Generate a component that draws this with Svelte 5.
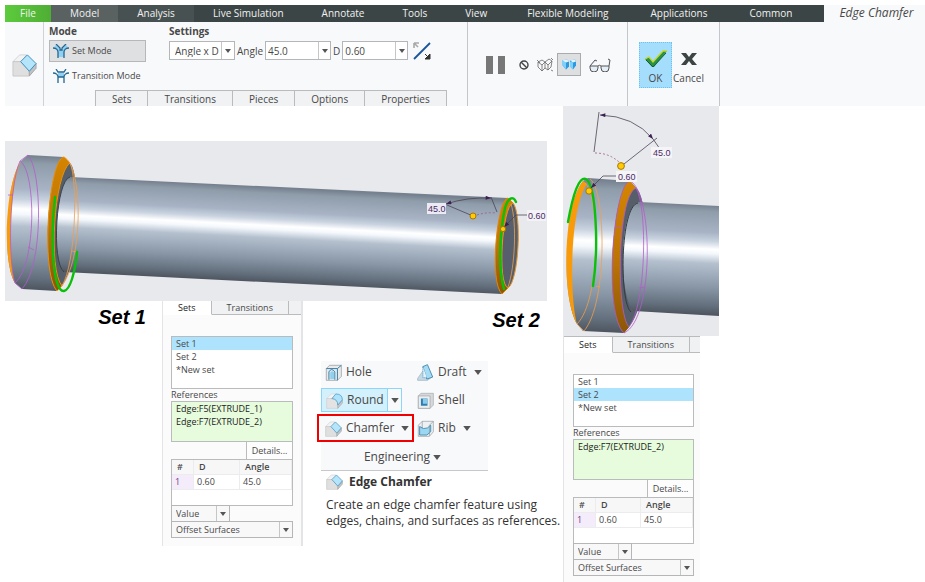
<script>
const tabs = ['Analysis', 'Live Simulation', 'Annotate', 'Tools', 'View', 'Flexible Modeling', 'Applications', 'Common'];
const slides = ['Sets', 'Transitions', 'Pieces', 'Options', 'Properties'];
const sets = ['Set 1', 'Set 2', '*New set'];

let angle = $state('45.0');
let distance = $state('0.60');
let mode = $state('set');
</script>

{#snippet chamferIcon()}
	<svg class="tool-icon" viewBox="0 0 26 26" aria-hidden="true">
		<path d="M1 10 8 3h7l-5 7z" fill="#f3f3f3" stroke="#d2d2d2" />
		<path d="M1 10h8l9 10v5H1z" fill="#dfdfdf" stroke="#c8c8c8" />
		<path d="m18 20 7-8v5l-7 8z" fill="#c0c3c6" stroke="#a4a4a4" />
		<path d="m9 10 7-7 9 9-7 8z" fill="#b4e5fb" stroke="#3b8fbd" />
	</svg>
{/snippet}

{#snippet modeIcon(joined)}
	<svg class="mode-icon" viewBox="0 0 16 14" aria-hidden="true">
		<path d={joined ? 'M5 4h6v4H5z' : 'M5 6h6v7H5z'} fill="#8fd0f3" />
		{#if !joined}
			<path d="m1 3 2-2 4 4-2 2zM15 3l-2-2-4 4 2 2z" fill="#8fd0f3" />
		{/if}
		<path d="M0 4c3 0 5 2 5 4v6M16 4c-3 0-5 2-5 4v6" fill="none" stroke="#24668f" stroke-width="1.3" />
		{#if joined}
			<path d="M3 0l2 3h6l2-3M5 8h6" fill="none" stroke="#24668f" stroke-width="1.3" />
		{:else}
			<path d="M3 0l4 4v2h2V4l4-4" fill="none" stroke="#24668f" stroke-width="1.3" />
		{/if}
	</svg>
{/snippet}

{#snippet arrow()}
	<svg class="arrow" viewBox="0 0 6 4" aria-hidden="true"><path d="M0 0h6L3 4z" /></svg>
{/snippet}

{#snippet drop(label, options, kind)}
	<span class="combo {kind}">
		<select aria-label={label}>
			{#each options as option}
				<option>{option}</option>
			{/each}
		</select>
		<span class="cap">{@render arrow()}</span>
	</span>
{/snippet}

{#snippet setPanel(selected, references, kind)}
	<section class="panel {kind}">
		<div class="panel-tabs">
			<button class="active">Sets</button>
			<button>Transitions</button>
			<span></span>
		</div>
		<div class="panel-body">
			<ul class="list">
				{#each sets as name}
					<li class:selected={name === selected}>{name}</li>
				{/each}
			</ul>
			<h3>References</h3>
			<ul class="list refs">
				{#each references as reference}
					<li>{reference}</li>
				{/each}
			</ul>
			<button class="details">Details...</button>
			<div class="values">
				<table>
					<thead>
						<tr><th>#</th><th>D</th><th>Angle</th></tr>
					</thead>
					<tbody>
						<tr><td>1</td><td>0.60</td><td>45.0</td></tr>
					</tbody>
				</table>
			</div>
			{@render drop('Value type', ['Value', 'Reference'], 'value')}
			{@render drop('Offset method', ['Offset Surfaces', 'Tangent To Surfaces'], 'offset')}
		</div>
	</section>
{/snippet}

<header>
	<div class="menu">
		<nav>
			<button class="file">File</button>
			<button class="model">Model</button>
			{#each tabs as tab}
				<button class:near={tab === 'Analysis'}>{tab}</button>
			{/each}
		</nav>
		<em>Edge Chamfer</em>
	</div>

	<div class="ribbon">
		<div class="feature">{@render chamferIcon()}</div>

		<div class="dashboard">
			<div class="groups">
				<div class="mode">
					<h2>Mode</h2>
					<button class:on={mode === 'set'} onclick={() => mode = 'set'}>{@render modeIcon(false)}Set Mode</button>
					<button class:on={mode === 'transition'} onclick={() => mode = 'transition'}>{@render modeIcon(true)}Transition Mode</button>
				</div>
				<div class="settings">
					<h2>Settings</h2>
					<div class="fields">
						{@render drop('Dimension scheme', ['Angle x D', 'D x D', '45 x D'], 'scheme')}
						<label for="angle">Angle</label>
						<span class="combo number">
							<input id="angle" bind:value={angle} />
							<button class="cap" aria-label="Recent angles">{@render arrow()}</button>
						</span>
						<label for="distance">D</label>
						<span class="combo number">
							<input id="distance" bind:value={distance} />
							<button class="cap" aria-label="Recent distances">{@render arrow()}</button>
						</span>
						<button class="flip" aria-label="Flip angle">
							<svg viewBox="0 0 18 18">
								<path d="M1 17 17 1" stroke="#17549a" stroke-width="1.8" />
								<path d="M1 1h5M1 1v5M1 1l4 4" fill="none" stroke="#a9a9a9" stroke-width="1.6" />
								<path d="M17 12v5h-5zM12 12l4 4" fill="#333" stroke="#333" />
							</svg>
						</button>
					</div>
				</div>
			</div>
			<div class="slides">
				{#each slides as slide}
					<button>{slide}</button>
				{/each}
			</div>
		</div>

		<div class="preview">
			<button class="pause" aria-label="Pause">
				<svg viewBox="0 0 19 18"><path d="M0 0h7v18H0zM12 0h7v18h-7z" fill="#777" /></svg>
			</button>
			<button aria-label="No preview">
				<svg class="none" viewBox="0 0 10 10"><circle cx="5" cy="5" r="4" /><path d="m2 2 6 6" /></svg>
			</button>
			<button aria-label="Unattached preview">
				<svg class="mesh" viewBox="0 0 16 14">
					<path d="m1 4 4-2 3 2v6l-3 3-4-4zM1 4l4 3 3-3M5 7v6M8 4l4-3 3 2-1 6-3 3-3-2M8 4l3 3 4-4M11 7v5M0 2l3 3M14 0l2 2M14 12l2 1" />
				</svg>
			</button>
			<button class="shaded" aria-label="Attached preview">
				<svg viewBox="0 0 16 12">
					<path d="m1 2 5-1 2 2v5l-3 3-4-5z" fill="#2b9ae0" />
					<path d="m1 2 4 2v7L1 6z" fill="#7dd0fa" />
					<path d="m9 2 5-1 1 2v4l-3 4-3-3z" fill="#2b9ae0" />
					<path d="m9 3 3 1v7L9 8z" fill="#7dd0fa" />
					<path d="m1 2 5-1 2 2-3 1zM9 2l5-1 1 2-3 1z" fill="#e0f6ff" />
				</svg>
			</button>
			<button aria-label="Verify">
				<svg class="glasses" viewBox="0 0 22 14">
					<path d="M1 8h8v2a3 3 0 0 1-8 0zM12 8h8v2a3 3 0 0 1-8 0zM9 8c1-1 2-1 3 0M1 8l5-6 2 1M20 8l1-6-2-1" />
				</svg>
			</button>
		</div>

		<div class="finish">
			<button class="ok">
				<svg viewBox="0 0 24 18">
					<path d="m1 9 4-2 4 5L19 1h4L10 17H8z" fill="#279348" />
					<path d="m1 9 4-2 4 5L19 1h4" fill="none" stroke="#c9d71e" stroke-width="1.3" />
					<path d="m2 10 7 7L22 3" fill="none" stroke="#1b5b34" />
				</svg>
				OK
			</button>
			<button>
				<svg viewBox="0 0 24 18"><path d="M4 3h5l3 4 3-4h5l-5 6 5 6h-5l-3-4-3 4H4l5-6z" fill="#3c4444" /></svg>
				Cancel
			</button>
		</div>
	</div>
</header>

<main>
	<div class="left">
		<svg class="scene" viewBox="5 141 542 160" role="img" aria-label="Pin with chamfered edges">
			<defs>
				<linearGradient id="shaft" gradientUnits="userSpaceOnUse" x1="70" y1="177" x2="65" y2="272">
					<stop offset="0" stop-color="#76818f" />
					<stop offset=".06" stop-color="#8f9caa" />
					<stop offset=".25" stop-color="#a8b4c5" />
					<stop offset=".33" stop-color="#c9d3e0" />
					<stop offset=".4" stop-color="#fff" />
					<stop offset=".44" stop-color="#f4f8fc" />
					<stop offset=".53" stop-color="#b4c0ce" />
					<stop offset=".75" stop-color="#8896a6" />
					<stop offset=".92" stop-color="#626e7b" />
					<stop offset="1" stop-color="#4d555f" />
				</linearGradient>
				<linearGradient id="head" href="#shaft" x1="42" y1="156" x2="37" y2="290" />
				<linearGradient id="ring" x1="0" y1="0" x2="0" y2="1">
					<stop offset="0" stop-color="#d48400" />
					<stop offset=".5" stop-color="#bd7505" />
					<stop offset="1" stop-color="#8c5606" />
				</linearGradient>
				<marker id="tip" viewBox="0 0 8 6" refX="8" refY="3" markerWidth="6" markerHeight="4" markerUnits="userSpaceOnUse" orient="auto-start-reverse">
					<path d="M0 0l8 3-8 3z" fill="#3a2152" />
				</marker>
			</defs>
			<path d="M5 141h542v160H5z" fill="#e8e9ed" />

			<path d="M28 155 64 157C51 170 42 262 57 291L22 289 15 283C2 262 5 184 21 161z" fill="url(#head)" />
			<path d="M21 161C5 184 2 262 15 283 8 262 9 186 21 161z" fill="#f99b09" />
			<path class="violet" d="M28 155C42 170 44 265 22 289M20 161C36 170 37 264 15 283C8 262 9 186 20 161M20 161l8-6M15 283l7 6M28 247l6 3M8 195h5" />

			<path d="M64 157 70 163C80 172 82 258 62 286L57 291C40 272 49 158 64 157z" fill="#555e69" />
			<path d="M64 157C49 158 40 272 57 291L62 286C48 270 54 174 70 163z" fill="url(#ring)" stroke="#e8920c" />
			<path d="M70 177C56 180 51 262 64 272L502 294 508 198z" fill="url(#shaft)" />
			<path d="M70 177C56 180 51 262 64 272" fill="none" stroke="#39424c" />
			<path class="amber" d="M70 163C78 180 76 262 62 286M64 157C83 165 85 268 57 291M72 251l5 1" />
			<path class="green" d="M55 197C50 240 53 293 64 291C70 290 75 273 77 252" />

			<path d="M508 198C497 199 489 283 502 294L508 288 518 240 513 203z" fill="url(#ring)" stroke="#dc860b" />
			<path d="M513 203C502 206 497 284 508 288C519 281 522 213 513 203z" fill="#565f6b" stroke="#e8972a" />
			<path class="amber" d="M511 204C517 222 515 268 508 287" />
			<path class="green" d="M516 202C513 195 508 198 505 208C500 230 498 269 504 289" />

			<path class="dim" d="M447 205l26 11M491 197l6 15M516 215h12" />
			<path class="dim" d="M446 204Q467 197 491 198" marker-start="url(#tip)" marker-end="url(#tip)" />
			<path class="dim" d="M516 215 504 227" marker-end="url(#tip)" />
			<path class="dash" d="M477 215q9-3 19-2" />
			<circle class="handle" cx="473" cy="216" r="3" />
			<circle class="handle" cx="503" cy="229" r="2.6" />
			<rect x="427" y="203" width="19" height="11" fill="#eceaf2" />
			<text x="428" y="212">45.0</text>
			<rect x="527" y="210" width="19" height="11" fill="#f3f2f6" />
			<text x="528" y="219">0.60</text>
		</svg>

		<div class="below">
			<strong class="first">Set 1</strong>
			{@render setPanel('Set 1', ['Edge:F5(EXTRUDE_1)', 'Edge:F7(EXTRUDE_2)'], 'tucked')}
			<div class="side">
				<strong>Set 2</strong>
				<div class="engineering">
					<button>
						<svg class="tool-icon" viewBox="0 0 26 26" aria-hidden="true">
							<path d="m2 7 5-5h18v17l-6 6H2z" fill="#e9eaeb" stroke="#8b8f94" />
							<path d="M6 24V12q4-7 9 0v12M2 7h17v18M19 7l6-5" fill="none" stroke="#357ea8" stroke-width="1.5" />
							<path d="M8 23V13q3-4 6 0v10z" fill="#8ed1ef" />
						</svg>
						Hole
					</button>
					<button>
						<svg class="tool-icon" viewBox="0 0 26 26" aria-hidden="true">
							<path d="M1 22 11 8l13 11-8 6H1z" fill="#c3d9e6" stroke="#9ab" />
							<path d="m9 4 7-3 8 19-9 3z" fill="#a4dcf5" stroke="#3d83a9" stroke-width="1.3" />
							<path d="M9 4v17h6" fill="#e2f3fb" stroke="#3d83a9" stroke-dasharray="2 1" />
						</svg>
						Draft {@render arrow()}
					</button>
					<div class="split">
						<button>
							<svg class="tool-icon" viewBox="0 0 26 26" aria-hidden="true">
								<path d="M1 10 8 3h8l-7 7z" fill="#f3f3f3" stroke="#d5d5d5" />
								<path d="M1 10h8q9 1 9 10v5H1z" fill="#e3e3e3" stroke="#d0d0d0" />
								<path d="m18 20 7-8v5l-7 8z" fill="#c7c9cc" stroke="#aaa" />
								<path d="M9 10 15 3q10 0 10 9l-7 8q0-9-9-10z" fill="#aee3fb" stroke="#3b8fbd" />
							</svg>
							Round
						</button>
						<button class="more" aria-label="More rounds">{@render arrow()}</button>
					</div>
					<button>
						<svg class="tool-icon" viewBox="0 0 26 26" aria-hidden="true">
							<path d="m2 6 4-4h19v18l-5 5H2z" fill="#d6d8da" stroke="#a3a7ab" />
							<path d="M2 6h18v19H2z" fill="#eceded" stroke="#9b9fa3" />
							<path d="M6 10h10v11H6z" fill="#2f7fae" />
							<path d="M9 10h7v8H9z" fill="#8ccbed" />
						</svg>
						Shell
					</button>
					<button class="framed">{@render chamferIcon()}Chamfer {@render arrow()}</button>
					<button>
						<svg class="tool-icon" viewBox="0 0 26 26" aria-hidden="true">
							<path d="m2 8 6-6h17v16l-6 7H2z" fill="#eef0f1" stroke="#8e969c" />
							<path d="M4 23V10l6 3q6 1 11-5v10l-6 5z" fill="#9ad7f3" stroke="#3d83a9" stroke-width="1.3" />
							<path d="M8 2v12M25 2l-6 6v16" fill="none" stroke="#7d94a2" />
						</svg>
						Rib {@render arrow()}
					</button>
					<button class="group">Engineering {@render arrow()}</button>
				</div>
				<div class="tip">
					<h4>{@render chamferIcon()}Edge Chamfer</h4>
					<p>Create an edge chamfer feature using<br>edges, chains, and surfaces as references.</p>
				</div>
			</div>
		</div>
	</div>

	<div class="right">
		<svg class="scene" viewBox="563 106 156 230" role="img" aria-label="Pin head with both chamfer sets">
			<defs>
				<linearGradient id="neck" href="#shaft" x1="665" y1="203" x2="660" y2="313" />
				<linearGradient id="cap" href="#shaft" x1="605" y1="180" x2="599" y2="332" />
			</defs>
			<path d="M563 106h156v230H563z" fill="#e8e9ed" />
			<path d="M588 178 630 181C614 200 605 308 624 333L583 331 577 324C561 296 563 206 583 181z" fill="url(#cap)" />
			<path d="M583 181C563 206 561 296 577 324C569 296 570 207 587 184z" fill="#f99b09" />
			<path class="amber" d="M590 179C606 190 608 303 584 331M585 183C600 196 601 300 577 324L584 331M596 286l4 1" />
			<path d="M630 181 636 188C650 198 652 300 629 327L624 333C603 315 613 184 630 181z" fill="#555e69" />
			<path d="M630 181C613 184 603 315 624 333L629 327C616 314 617 196 636 188z" fill="url(#ring)" />
			<path d="M639 202C618 206 619 302 634 311L719 316V206z" fill="url(#neck)" />
			<path d="M638 203C620 206 619 302 631 312" fill="none" stroke="#333b44" />
			<path class="violet" d="M630 181C613 184 603 315 624 333C655 319 653 191 630 181M636 188C617 196 616 314 629 327C646 305 648 209 636 188M615 226l7 2M639 288l6-1" />
			<path class="green" d="M568 222C573 194 579 176 586 179C596 185 599 246 593 286" />

			<path class="dim" d="M599 112l-5 40M657 138l-33 26M653 139l7 10M616 176h-13" />
			<path class="dim" d="M600 115Q634 116 653 139" marker-start="url(#tip)" marker-end="url(#tip)" />
			<path class="dim" d="m603 176-12 12" marker-end="url(#tip)" />
			<path class="dash" d="M595 153q14 0 24 9" />
			<circle class="handle" cx="621" cy="166" r="3.4" />
			<circle class="handle" cx="589" cy="191" r="3.2" />
			<rect x="651" y="147" width="21" height="11" fill="#f5f4f7" />
			<text x="653" y="156">45.0</text>
			<rect x="616" y="171" width="21" height="11" fill="#f5f4f7" />
			<text x="618" y="180">0.60</text>
		</svg>
		{@render setPanel('Set 2', ['Edge:F7(EXTRUDE_2)'], 'open')}
	</div>
</main>

<style>
:global(body) {
	margin: 0;
	background: #fff;
	color: #484848;
	font: 10px/12px 'Open Sans', 'Noto Sans', sans-serif;
}

button, input, select {
	box-sizing: border-box;
	margin: 0;
	padding: 0;
	border: 0;
	border-radius: 0;
	background: none;
	color: inherit;
	font: inherit;
	appearance: none;
}

h2, h3, h4, p, ul {
	margin: 0;
	padding: 0;
	font: inherit;
	list-style: none;
}

svg {
	display: block;
	flex: none;
}

header {
	padding: 5px 0 0 5px;
}

/* menu */

.menu {
	display: flex;
	height: 17px;
	background: #f8f9fb;

	em {
		width: 101px;
		padding-left: 4px;
		box-sizing: border-box;
		font-size: 12px;
		line-height: 15px;
		text-align: center;
		white-space: nowrap;
	}
}

nav {
	flex: 1;
	display: flex;
	background: #3c4545;
	color: #f2f2f2;

	button {
		padding: 0 19px 2px;
		white-space: nowrap;
	}

	button:nth-child(n + 8) {
		padding: 0 21px 2px;
	}

	.file {
		width: 46px;
		padding: 0 0 2px;
		background: linear-gradient(90deg, #5ccb3c, #4fae35);
	}

	.model {
		background: #596161;
	}

	.near {
		background: #485151;
	}
}

/* ribbon */

.ribbon {
	display: flex;
	height: 84px;
	background: #f8f9fb;
}

.feature {
	display: flex;
	align-items: center;
	justify-content: center;
	width: 38px;
	border-right: 1px solid #d0d2d5;

	.tool-icon {
		width: 25px;
		height: 25px;
	}
}

.dashboard {
	display: flex;
	flex-direction: column;
	justify-content: space-between;
	width: 423px;
	border-right: 1px solid #c4c6c9;

	h2 {
		padding: 3px 0;
		font-weight: 700;
	}
}

.groups {
	display: flex;
	gap: 23px;
	padding-left: 5px;
}

.mode {
	width: 97px;

	button {
		display: flex;
		align-items: center;
		gap: 3px;
		width: 100%;
		height: 22px;
		padding-left: 3px;
		border: 1px solid transparent;
		font-size: 9px;
		white-space: nowrap;
	}

	button + button {
		margin-top: 3px;
	}

	.on {
		border-color: #b5b7b9;
		background: #dfe0e2;
	}
}

.mode-icon {
	width: 16px;
	height: 14px;
}

.fields {
	display: flex;
	align-items: center;
	gap: 2px;
	padding-top: 1px;
}

.combo {
	position: relative;
	display: flex;
	box-sizing: border-box;
	height: 19px;
	border: 1px solid #b4b6b8;
	background: #fff;

	select, input {
		flex: 1;
		width: 100%;
		min-width: 0;
		padding: 0 2px;
	}
}

.cap {
	display: flex;
	align-items: center;
	justify-content: center;
	width: 12px;
	border-left: 1px solid #c4c6c8;
}

select + .cap {
	position: absolute;
	top: 0;
	right: 0;
	bottom: 0;
	pointer-events: none;
}

.arrow {
	width: 6px;
	height: 4px;
	fill: #555;
}

.scheme {
	width: 66px;

	select {
		padding-left: 5px;
	}
}

.number {
	width: 66px;
}

.flip {
	margin-left: 3px;

	svg {
		width: 18px;
		height: 18px;
	}
}

.slides {
	display: flex;
	padding-left: 51px;

	button {
		height: 16px;
		padding: 0 16px;
		border: 1px solid #b9bbbd;
		border-bottom: 0;
		background: #f1f2f3;
	}

	button + button {
		border-left: 0;
	}
}

.preview {
	display: flex;
	align-items: center;
	gap: 8px;
	width: 141px;
	padding: 1px 0 0 18px;
	border-right: 1px solid #c4c6c9;

	.pause {
		margin-right: 6px;
	}

	.pause svg {
		width: 19px;
		height: 18px;
	}

	.none {
		width: 10px;
		height: 10px;
		fill: none;
		stroke: #444;
		stroke-width: 1.4;
	}

	.mesh {
		width: 16px;
		height: 14px;
		fill: none;
		stroke: #666;
		stroke-width: 0.8;
	}

	.shaded {
		margin-left: -4px;
		padding: 4px 3px;
		border: 1px solid #a9abad;
		background: #dddfe1;
	}

	.shaded svg {
		width: 16px;
		height: 13px;
	}

	.glasses {
		width: 22px;
		height: 14px;
		fill: #e3eef7;
		stroke: #555;
	}
}

.finish {
	display: flex;
	align-items: center;
	width: 80px;
	padding: 2px 0 0 11px;
	border-right: 1px solid #c4c6c9;

	button {
		display: flex;
		flex-direction: column;
		align-items: center;
		gap: 4px;
		min-width: 33px;
		height: 46px;
		padding-top: 8px;
	}

	svg {
		width: 24px;
		height: 18px;
	}

	.ok {
		border: 1px dotted #6cc3f0;
		padding-top: 7px;
		background: #a5ddfd;
	}
}

/* content */

main {
	display: grid;
	grid-template-columns: minmax(0, 542fr) minmax(0, 156fr) minmax(0, 190fr);
	gap: 16px;
	align-items: start;
	padding-left: 5px;
}

.left {
	padding-top: 35px;
}

.scene {
	width: 100%;
	height: auto;
	font-family: 'Liberation Sans', Arial, sans-serif;
	font-size: 9px;

	text {
		fill: #4b2a68;
	}
}

.violet, .amber, .green, .dim, .dash {
	fill: none;
	stroke-width: 0.8;
}

.violet { stroke: #b45ccc; }
.amber { stroke: #f0a04a; }
.dim { stroke: #4b4456; }

.green {
	stroke: #0ac00a;
	stroke-width: 2.4;
	stroke-linecap: round;
}

.dash {
	stroke: #a05888;
	stroke-dasharray: 2 2;
}

.handle {
	fill: #ffcb05;
	stroke: #a87700;
}

.below {
	display: flex;
	align-items: flex-start;

	strong {
		color: #000;
		font: italic 700 20px/24px 'Liberation Sans', Arial, sans-serif;
	}
}

.first {
	flex: none;
	width: 141px;
	padding: 4px 16px 0 0;
	text-align: right;
}

/* set panel */

.panel {
	flex: none;
	box-sizing: border-box;
	background: #fbfbfc;
	font-size: 9px;
}

.tucked {
	width: 141px;
	border: solid #e3e4e6;
	border-width: 0 2px 0 1px;
}

.open {
	width: 137px;
	border-left: 1px solid #e3e4e6;
}

.panel-tabs {
	display: flex;
	height: 17px;

	button, span {
		border: solid #b9bbbd;
		border-width: 1px 1px 1px 0;
		background: #eff1f2;
	}

	button {
		padding: 0 15px;
	}

	span {
		flex: 1;
		border-right: 0;
	}

	.active {
		border-bottom-color: transparent;
		background: #fff;
		color: #222;
	}
}

.tucked .panel-tabs {
	height: 14px;

	button, span {
		border-top: 0;
	}
}

.panel-body {
	display: flex;
	flex-direction: column;
	padding: 21px 8px 8px;
}

.open .panel-body {
	padding: 21px 6px 8px 9px;
}

.list {
	box-sizing: border-box;
	height: 53px;
	border: 1px solid #b9bbbd;
	background: #fff;
	line-height: 13px;

	li {
		padding-left: 4px;
	}

	.selected {
		background: #aee3fd;
	}
}

.refs {
	height: 41px;
	background: #e6fcdc;
	color: #222;
}

.details {
	align-self: flex-end;
	width: 47px;
	height: 17px;
	border: solid #b9bbbd;
	border-width: 0 1px;
	background: #fdfdfd;
}

.values {
	box-sizing: border-box;
	height: 47px;
	border: 1px solid #b9bbbd;
	background: #fff;

	table {
		width: 100%;
		border-collapse: collapse;
		table-layout: fixed;
	}

	th, td {
		height: 14px;
		padding: 0 0 0 3px;
		border-right: 1px solid #ececee;
		border-bottom: 1px solid #ececee;
		font-weight: 400;
		text-align: left;
	}

	th {
		padding-left: 5px;
		background: #f7f7f8;
		font-weight: 600;
	}

	th:first-child { width: 16px; }
	th:last-child { width: 46px; }

	td:first-child {
		background: #f5ecfb;
		color: #6b3f80;
	}
}

.value, .offset {
	height: 17px;
	margin-top: -1px;
	background: #f8f8f9;

	select {
		padding-left: 4px;
	}
}

.value { width: 59px; }

/* engineering group */

.side {
	display: flex;
	flex: 1;
	flex-direction: column;
	min-width: 0;
	padding-left: 18px;

	strong {
		align-self: flex-end;
		padding: 7px 7px 0 0;
	}
}

.engineering {
	display: grid;
	grid-template-columns: 92px 1fr;
	grid-template-rows: 22px 24px 22px 26px;
	row-gap: 5px;
	width: 167px;
	margin-top: 29px;
	border-bottom: 1px solid #c6c8ca;
	background: #f8f9fb;
	font-size: 12px;

	button {
		display: flex;
		align-items: center;
		gap: 4px;
		padding-left: 4px;
		white-space: nowrap;
	}

	.arrow {
		width: 8px;
		height: 5px;
		margin-left: 3px;
	}

	.group {
		grid-column: 1 / -1;
		justify-content: center;
		gap: 0;
		padding: 0 4px 0 0;
	}

	.framed {
		outline: 2px solid #f00000;
		outline-offset: 1px;
		margin: 0 2px 0 -1px;
		padding-left: 5px;
	}
}

.tool-icon {
	width: 17px;
	height: 17px;
}

.split {
	display: flex;
	width: 79px;
	border: 1px solid #8ed5f8;
	background: #d3f0fd;

	.more {
		width: 14px;
		margin-left: auto;
		padding: 0;
		justify-content: center;
		border-left: 1px solid #8ed5f8;
		background: #f8f9fb;
	}

	.more .arrow {
		margin: 0;
	}
}

.tip {
	padding-left: 5px;
	color: #333;
	font-size: 12px;
	line-height: 16px;
	white-space: nowrap;

	h4 {
		display: flex;
		align-items: center;
		gap: 6px;
		padding: 2px 0 7px;
		font-weight: 700;
	}
}
</style>
